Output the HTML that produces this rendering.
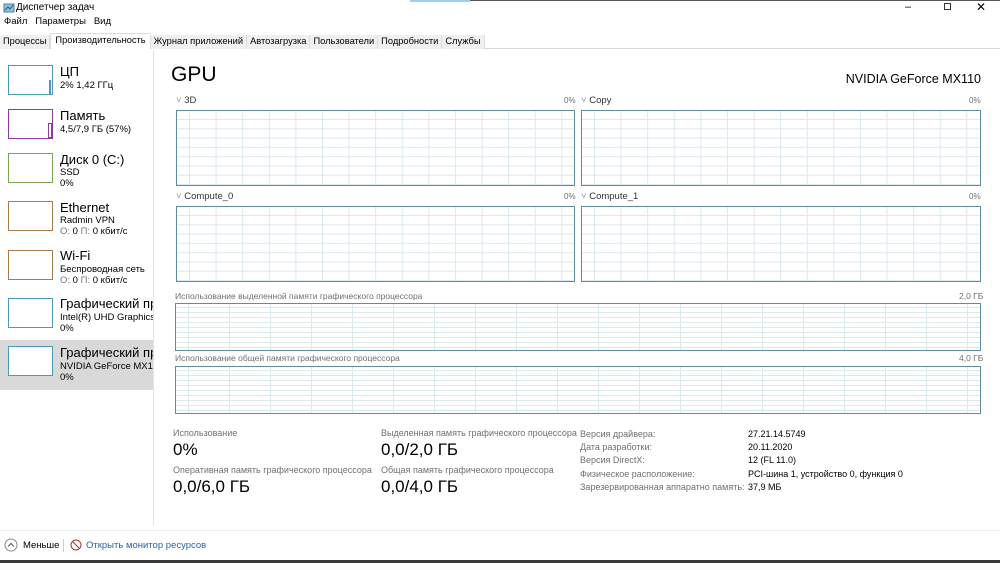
<!DOCTYPE html>
<html><head><meta charset="utf-8"><style>
*{margin:0;padding:0;box-sizing:border-box}
body{width:1000px;height:563px;overflow:hidden;background:#fff;font-family:"Liberation Sans","DejaVu Sans",sans-serif;color:#000;position:relative;font-size:11px}
.a{position:absolute;white-space:nowrap}
.g{position:absolute;border:1px solid #5b8fa0;background-color:#fff;
background-image:linear-gradient(to right,#dbe9ef 1px,transparent 1px),linear-gradient(to bottom,#dbe9ef 1px,transparent 1px);
background-size:26.6px 100%,100% 9.3px;background-position:12px 0,0 8px}
.m{background-size:41px 100%,100% 5px;background-position:12px 0,0 3px}
.th{position:absolute;left:8px;width:45px;height:30px;border:1px solid}
.t1{position:absolute;left:60px;font-size:13px;white-space:nowrap;overflow:hidden}
.t2{position:absolute;left:60px;font-size:9.5px;white-space:nowrap;overflow:hidden}
.lab{color:#707070;font-size:9px}
.big{font-size:17px}
.tb{padding:1px 3px;border-right:1px solid #ddd;background:#f0f0f0;height:14px}
</style></head><body>
<svg class="a" style="left:3px;top:2px" width="12" height="12"><rect x="1" y="2" width="10" height="8" fill="#8fc3e6" stroke="#4a7fb0"/><path d="M2 8l3-3 2 2 3-4" stroke="#2a6a2a" fill="none"/></svg>
<div class="a" style="left:16px;top:2px;font-size:10px">Диспетчер задач</div>
<div class="a" style="left:410px;top:0;width:60px;height:2px;background:#9cd0ef"></div>
<div class="a" style="left:470px;top:0;width:530px;height:1px;background:#555"></div>
<div class="a" style="left:905px;top:1px;font-size:11px">–</div>
<div class="a" style="left:944px;top:3px;width:7px;height:7px;border:1px solid #333"></div>
<div class="a" style="left:976px;top:0;font-size:12px">✕</div>
<div class="a" style="left:4px;top:16px;font-size:9.5px">Файл &nbsp;&nbsp;Параметры &nbsp;&nbsp;Вид</div>
<div class="a" style="left:0;top:34px;width:1000px;height:15px;border-bottom:1px solid #d9d9d9"></div>
<div class="a" style="left:0;top:35px;font-size:9.3px;display:flex">
<span class="tb">Процессы</span>
<span style="padding:1px 4px;background:#fff;border:1px solid #ddd;border-bottom:none;margin-top:-2px;height:16px">Производительность</span>
<span class="tb">Журнал приложений</span>
<span class="tb">Автозагрузка</span>
<span class="tb">Пользователи</span>
<span class="tb">Подробности</span>
<span class="tb">Службы</span></div>
<div class="a" style="left:153px;top:50px;width:1px;height:475px;background:#e3e3e3"></div>
<div class="a" style="left:0;top:340px;width:153px;height:50px;background:#d9d9d9"></div>
<div class="th" style="top:65px;border-color:#4b9ab8"></div><div class="a" style="left:49px;top:80px;width:2px;height:14px;background:#4b9ab8"></div>
<div class="t1" style="top:64px">ЦП</div><div class="t2" style="top:80px">2% 1,42 ГГц</div>
<div class="th" style="top:109px;border-color:#8e3c9e"></div><div class="a" style="left:48px;top:123px;width:4px;height:15px;border:1px solid #8e3c9e"></div>
<div class="t1" style="top:108px">Память</div><div class="t2" style="top:124px">4,5/7,9 ГБ (57%)</div>
<div class="th" style="top:153px;border-color:#79a84e"></div>
<div class="t1" style="top:152px">Диск 0 (C:)</div><div class="t2" style="top:167px">SSD</div><div class="t2" style="top:178px">0%</div>
<div class="th" style="top:201px;border-color:#a97a4a"></div>
<div class="t1" style="top:200px">Ethernet</div><div class="t2" style="top:215px">Radmin VPN</div><div class="t2" style="top:226px"><span style="color:#777">О:</span> 0 <span style="color:#777">П:</span> 0 кбит/с</div>
<div class="th" style="top:250px;border-color:#a97a4a"></div>
<div class="t1" style="top:248px">Wi-Fi</div><div class="t2" style="top:264px">Беспроводная сеть</div><div class="t2" style="top:275px"><span style="color:#777">О:</span> 0 <span style="color:#777">П:</span> 0 кбит/с</div>
<div class="th" style="top:298px;border-color:#4b9ab8"></div>
<div class="t1" style="top:296px;width:93px">Графический процессор</div><div class="t2" style="top:312px;width:93px">Intel(R) UHD Graphics 620</div><div class="t2" style="top:323px">0%</div>
<div class="th" style="top:346px;border-color:#4b9ab8;background:#fff"></div>
<div class="t1" style="top:345px;width:93px">Графический процессор</div><div class="t2" style="top:361px;width:93px">NVIDIA GeForce MX110</div><div class="t2" style="top:372px">0%</div>

<div class="a" style="left:171px;top:63px;font-size:21px">GPU</div>
<div class="a" style="right:19px;top:72px;font-size:12.5px">NVIDIA GeForce MX110</div>
<div class="a lab" style="left:176px;top:95px;font-size:9.5px;color:#333"><span style="color:#999">˅</span> 3D</div><div class="a lab" style="left:564px;top:96px;font-size:8px">0%</div>
<div class="a lab" style="left:581px;top:95px;font-size:9.5px;color:#333"><span style="color:#999">˅</span> Copy</div><div class="a lab" style="left:969px;top:96px;font-size:8px">0%</div>
<div class="g" style="left:176px;top:110px;width:399px;height:76px"></div>
<div class="g" style="left:581px;top:110px;width:400px;height:76px"></div>
<div class="a lab" style="left:176px;top:191px;font-size:9.5px;color:#333"><span style="color:#999">˅</span> Compute_0</div><div class="a lab" style="left:564px;top:192px;font-size:8px">0%</div>
<div class="a lab" style="left:581px;top:191px;font-size:9.5px;color:#333"><span style="color:#999">˅</span> Compute_1</div><div class="a lab" style="left:969px;top:192px;font-size:8px">0%</div>
<div class="g" style="left:176px;top:206px;width:399px;height:76px"></div>
<div class="g" style="left:581px;top:206px;width:400px;height:76px"></div>
<div class="a lab" style="left:175px;top:291px;font-size:8.5px">Использование выделенной памяти графического процессора</div><div class="a lab" style="left:959px;top:291px;font-size:8.5px">2,0 ГБ</div>
<div class="g m" style="left:175px;top:303px;width:806px;height:48px"></div>
<div class="a lab" style="left:175px;top:353px;font-size:8.5px">Использование общей памяти графического процессора</div><div class="a lab" style="left:959px;top:353px;font-size:8.5px">4,0 ГБ</div>
<div class="g m" style="left:175px;top:366px;width:806px;height:48px"></div>

<div class="a lab" style="left:173px;top:428px">Использование</div><div class="a big" style="left:173px;top:440px">0%</div>
<div class="a lab" style="left:173px;top:465px">Оперативная память графического процессора</div><div class="a big" style="left:173px;top:477px">0,0/6,0 ГБ</div>
<div class="a lab" style="left:381px;top:428px">Выделенная память графического процессора</div><div class="a big" style="left:381px;top:440px">0,0/2,0 ГБ</div>
<div class="a lab" style="left:381px;top:465px">Общая память графического процессора</div><div class="a big" style="left:381px;top:477px">0,0/4,0 ГБ</div>
<div class="a lab" style="left:580px;top:428px;line-height:13.2px">Версия драйвера:<br>Дата разработки:<br>Версия DirectX:<br>Физическое расположение:<br>Зарезервированная аппаратно память:</div>
<div class="a" style="left:748px;top:428px;line-height:13.2px;font-size:9px">27.21.14.5749<br>20.11.2020<br>12 (FL 11.0)<br>PCI-шина 1, устройство 0, функция 0<br>37,9 МБ</div>

<div class="a" style="left:0;top:530px;width:1000px;height:1px;background:#eee"></div>
<svg class="a" style="left:4px;top:538px" width="14" height="14"><circle cx="7" cy="7" r="6" fill="none" stroke="#888"/><path d="M4 8.5l3-3 3 3" stroke="#555" fill="none"/></svg>
<div class="a" style="left:23px;top:540px;font-size:9.5px">Меньше</div>
<div class="a" style="left:63px;top:539px;width:1px;height:13px;background:#ccc"></div>
<svg class="a" style="left:70px;top:539px" width="12" height="12"><circle cx="6" cy="6" r="5" fill="#fff" stroke="#a33"/><path d="M3 3l6 6" stroke="#a33"/></svg>
<div class="a" style="left:86px;top:540px;font-size:9.5px;color:#2a63a8">Открыть монитор ресурсов</div>
<div class="a" style="left:0;top:560px;width:1000px;height:3px;background:#3a3a3a"></div>
</body></html>
